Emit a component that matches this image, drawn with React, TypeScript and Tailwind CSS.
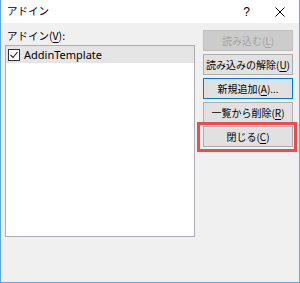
import React from "react";

const jp = { fontFamily: '"Noto Sans CJK JP", "Noto Sans", sans-serif' };

function Btn({ children, disabled, def }: { children: React.ReactNode; disabled?: boolean; def?: boolean }) {
  let cls = "w-[90px] h-[21px] flex items-center justify-center text-[10px] leading-none whitespace-nowrap ";
  if (disabled) cls += "bg-[#cccccc] border border-[#bfbfbf] text-[#a3a3a3]";
  else if (def) cls += "bg-[#e1e1e1] border border-[#0078d7] text-black";
  else cls += "bg-[#e1e1e1] border border-[#adadad] text-black";
  return <div className={cls}>{children}</div>;
}

export default function App() {
  return (
    <div className="w-[300px] h-[283px] flex flex-col border-x border-b border-[#5ca7e8] bg-[#f0f0f0]" style={jp}>
      <div className="h-[23px] bg-white flex items-center pl-[6px] pr-[12px] shrink-0">
        <span className="text-[10.5px] text-black leading-none">アドイン</span>
        <span className="ml-auto text-[12px] text-black leading-none mr-[25px]" style={{ fontFamily: '"Liberation Sans", sans-serif' }}>?</span>
        <svg width="10" height="10" viewBox="0 0 10 10" className="mr-[2px]">
          <path d="M0.5 0.5 L9.5 9.5 M9.5 0.5 L0.5 9.5" stroke="#000" strokeWidth="1" />
        </svg>
      </div>
      <div className="flex-1 flex pl-[4px]">
        <div className="flex flex-col w-[190px]">
          <div className="mt-[6px] h-[14px] flex items-center text-[10.5px] text-black leading-none whitespace-nowrap pl-[2px]">
            アドイン(<span className="underline underline-offset-2">V</span>):
          </div>
          <div className="mt-[2px] h-[192px] bg-white border border-[#abadb3] flex flex-col">
            <div className="h-[17px] bg-[#e5e5e5] flex items-center pl-[2px]">
              <div className="w-[12px] h-[12px] border border-[#333333] bg-white flex items-center justify-center">
                <svg width="10" height="10" viewBox="0 0 10 10">
                  <path d="M1.5 5 L4 7.5 L8.5 2" stroke="#222" strokeWidth="1.1" fill="none" />
                </svg>
              </div>
              <span className="ml-[4px] text-[11px] text-black leading-none" style={{ fontFamily: '"Noto Sans", sans-serif' }}>AddinTemplate</span>
            </div>
          </div>
        </div>
        <div className="ml-[8px] flex flex-col mt-[7px] gap-[3px]">
          <Btn disabled>読み込む(<span className="underline underline-offset-2">L</span>)</Btn>
          <Btn>読み込みの解除(<span className="underline underline-offset-2">U</span>)</Btn>
          <Btn def>新規追加(<span className="underline underline-offset-2">A</span>)...</Btn>
          <Btn>一覧から削除(<span className="underline underline-offset-2">R</span>)</Btn>
          <div className="relative">
            <Btn>閉じる(<span className="underline underline-offset-2">C</span>)</Btn>
            <div className="absolute left-[-6px] top-[-4px] w-[100px] h-[30px] border-[3px] border-[#f04a4a]" />
          </div>
        </div>
      </div>
    </div>
  );
}
